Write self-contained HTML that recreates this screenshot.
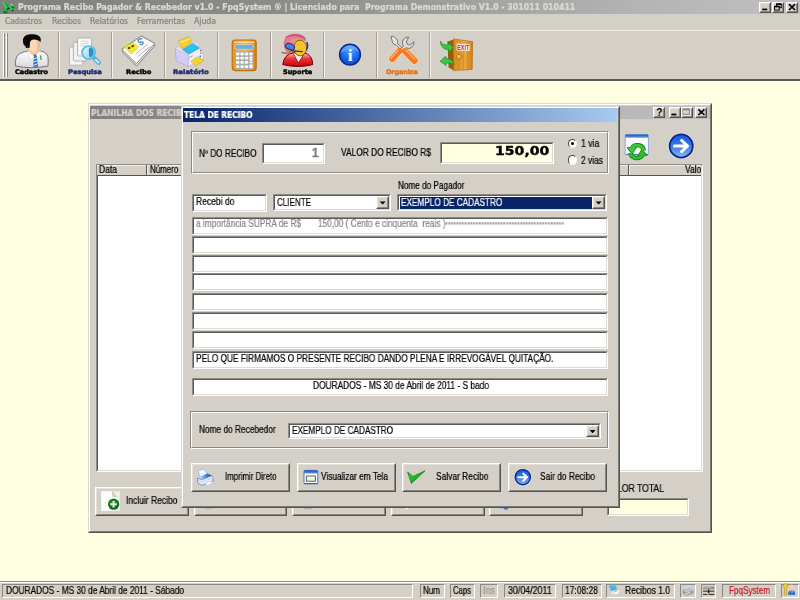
<!DOCTYPE html>
<html lang="pt-BR">
<head>
<meta charset="utf-8">
<title>Programa Recibo Pagador &amp; Recebedor v1.0</title>
<style>
html,body{margin:0;padding:0;}
body{width:800px;height:600px;overflow:hidden;position:relative;background:#ffffe1;font-family:"Liberation Sans",sans-serif;font-size:10px;color:#000;}
.a{position:absolute;box-sizing:border-box;}
.t{position:absolute;white-space:pre;line-height:14px;height:14px;transform-origin:0 0;will-change:transform;-webkit-text-stroke:0.22px;}
.face{background:#d4d0c8;}
#title{left:0;top:0;width:800px;height:14px;background:linear-gradient(90deg,#808080 0%,#8c8c8c 35%,#b4b4b4 80%,#c0c0c0 100%);}
#menu{left:0;top:14px;width:800px;height:16px;}
#tool{left:0;top:30px;width:800px;height:51px;border-top:1px solid #f1efea;border-bottom:2px solid #5a5854;}
.sep{position:absolute;top:32px;width:2px;height:46px;border-left:1px solid #a5a199;border-right:1px solid #f3f1ed;box-sizing:border-box;}
.sunk{border:1px solid;border-color:#8e8b86 #fff #fff #8e8b86;background:#fff;}
.sunk:before{content:"";position:absolute;left:0;top:0;right:0;bottom:0;border:1px solid;border-color:#5c5a57 #dedbd4 #dedbd4 #5c5a57;}
.btn{border:1px solid;border-color:#fff #55534f #55534f #fff;background:#d4d0c8;}
.btn:before{content:"";position:absolute;left:0;top:0;right:0;bottom:0;border:1px solid;border-color:#e4e1da #8b8882 #8b8882 #e4e1da;}
.grp{border:1px solid;border-color:#8b8882 #fff #fff #8b8882;}
.grp:before{content:"";position:absolute;left:0;top:0;right:0;bottom:0;border:1px solid;border-color:#fff #8b8882 #8b8882 #fff;}
.win{border:1px solid;border-color:#dcd9d2 #55534e #55534e #dcd9d2;background:#d4d0c8;}
.win:before{content:"";position:absolute;left:0;top:0;right:0;bottom:0;border:1px solid;border-color:#fff #7d7a73 #7d7a73 #fff;}
.sp{border:1px solid;border-color:#8b8882 #fff #fff #8b8882;}
.cb{position:absolute;box-sizing:border-box;width:12px;height:11px;top:107px;}
.dd{position:absolute;box-sizing:border-box;width:13px;height:13px;}
.dd svg,.cb svg{position:absolute;left:0;top:0;}
.radio{position:absolute;box-sizing:border-box;width:9.4px;height:9.4px;border-radius:50%;background:#fff;border:1.7px solid;border-color:#4a4844 #f6f4f0 #f6f4f0 #4a4844;}
</style>
</head>
<body>
<div id="title" class="a"></div>
<div id="menu" class="a face"></div>
<div id="tool" class="a face"></div>
<div class="a" style="left:3px;top:33px;width:2px;height:44px;border-left:1px solid #fff;border-right:1px solid #8b8882"></div>
<div class="a" style="left:6px;top:33px;width:2px;height:44px;border-left:1px solid #fff;border-right:1px solid #8b8882"></div>
<div class="sep" style="left:58px"></div>
<div class="sep" style="left:111px"></div>
<div class="sep" style="left:164px"></div>
<div class="sep" style="left:217px"></div>
<div class="sep" style="left:270px"></div>
<div class="sep" style="left:323px"></div>
<div class="sep" style="left:376px"></div>
<div class="sep" style="left:429px"></div>
<div class="a btn" style="left:759px;top:2px;width:12px;height:10.6px"></div>
<div class="a btn" style="left:772.2px;top:2px;width:11.6px;height:10.6px"></div>
<div class="a btn" style="left:785.8px;top:2px;width:12.4px;height:10.6px"></div>
<svg class="a" style="left:0;top:0" width="800" height="82" viewBox="0 0 800 82">
<defs>
<linearGradient id="gOr" x1="0" y1="0" x2="0" y2="1"><stop offset="0" stop-color="#ffa45a"/><stop offset="1" stop-color="#f06a10"/></linearGradient>
<linearGradient id="gRed" x1="0" y1="0" x2="0" y2="1"><stop offset="0" stop-color="#ffd0d0"/><stop offset=".45" stop-color="#f03030"/><stop offset="1" stop-color="#c00008"/></linearGradient>
<radialGradient id="gInfo" cx=".5" cy=".25" r=".8"><stop offset="0" stop-color="#5aa4ff"/><stop offset=".6" stop-color="#1468e8"/><stop offset="1" stop-color="#0a48c8"/></radialGradient>
<linearGradient id="gDoor" x1="0" y1="0" x2="1" y2="0"><stop offset="0" stop-color="#d88a20"/><stop offset=".6" stop-color="#eaa63c"/><stop offset="1" stop-color="#d08018"/></linearGradient>
<linearGradient id="gCalc" x1="0" y1="0" x2="1" y2="0"><stop offset="0" stop-color="#ec9414"/><stop offset=".5" stop-color="#f6b840"/><stop offset="1" stop-color="#dc800c"/></linearGradient>
<linearGradient id="gShirt" x1="0" y1="0" x2="0" y2="1"><stop offset="0" stop-color="#ffffff"/><stop offset="1" stop-color="#d8d8dc"/></linearGradient>
<linearGradient id="gLens" x1="0" y1="0" x2="1" y2="1"><stop offset="0" stop-color="#e8f6fc"/><stop offset="1" stop-color="#8ed0ee"/></linearGradient>
</defs>
<!-- main caption glyphs -->
<rect x="762.2" y="8.6" width="5" height="1.7" fill="#000"/>
<rect x="776.6" y="3.9" width="4.6" height="3.8" fill="none" stroke="#000" stroke-width="1"/>
<path d="M776.4 4.2h5" stroke="#000" stroke-width="1.5"/>
<rect x="774.6" y="6.3" width="4.6" height="3.8" fill="#d4d0c8" stroke="#000" stroke-width="1"/>
<path d="M774.4 6.6h5" stroke="#000" stroke-width="1.5"/>
<path d="M789 4.2 L795 10 M795 4.2 L789 10" stroke="#000" stroke-width="1.6"/>
<!-- app icon -->
<g>
<path d="M2.2 2.2 L4.4 1.2 L8.2 8.2 L6 9.6 Z" fill="#2fcf4a"/>
<path d="M4.4 1.2 L5.6 2.6 L8.8 7.8 L8.2 8.2 Z" fill="#0b6a22"/>
<circle cx="5.4" cy="10.6" r="2.7" fill="#1fb83c"/>
<path d="M2.9 11.6 A2.7 2.7 0 0 0 8 11.6 Z" fill="#0a6a20"/>
<path d="M7 9.4 L10 8.2" stroke="#063a12" stroke-width="1.4"/>
<ellipse cx="12" cy="7.4" rx="2.4" ry="3.6" fill="#35c453" transform="rotate(-25 12 7.4)"/>
<path d="M11.6 6.4 L14 8.2 M11.8 10 L13.6 11.2" stroke="#063a12" stroke-width="1.2"/>
<path d="M10.4 4.4 L12 4 L12.6 5.6" stroke="#8ce8a0" stroke-width="1" fill="none"/>
</g>
<!-- Cadastro: man -->
<g>
<path d="M15.4 66 Q14.6 54.5 22 52.6 L27.6 51 L40.6 51 Q48.6 52.6 48.2 60 L48 66 Q32 69.5 15.4 66 Z" fill="url(#gShirt)" stroke="#6a6a6a" stroke-width=".9"/>
<path d="M28.6 45 L39.4 45 L39.8 51.6 L34.6 56.2 L28.2 51.8 Z" fill="#f6c8a0"/>
<ellipse cx="34.2" cy="44.6" rx="6.1" ry="7.2" fill="#fbd9b8"/>
<path d="M36 38.6 Q40.6 39.6 40.2 46.6 Q39.6 51 36.4 52.4 Q38.6 46 36 38.6Z" fill="#f2b990"/>
<path d="M23 41.6 Q22.4 34.6 30.6 34.2 Q39.6 33.6 40.8 38.8 L40.6 42.2 Q38.6 39.4 34 39.4 Q30.6 39.6 30 42.4 L29.6 47.6 Q28.6 48.8 27.4 47.4 Q25.6 49.2 25.4 46 Q23.2 45.4 23 41.6Z" fill="#080808"/>
<path d="M28.2 51.4 L34.4 57 L31.4 59.6 L27 52.6Z M40 51.4 L34.8 57 L37.6 59.4 L41 52.4Z" fill="#ffffff" stroke="#c8c8cc" stroke-width=".4"/>
<path d="M33.6 54.6 L36 54.6 L37 56.8 L38.2 66.8 L33 66.8 L34 56.8Z" fill="#2f6fb5"/>
<path d="M33.6 59 L37.6 57.4 M33.2 62.2 L38 60.4 M33 65.4 L38.2 63.6" stroke="#cfe2f6" stroke-width="1.1"/>
<path d="M40.6 55.4 L41.2 60" stroke="#2ea83a" stroke-width="1.3"/>
</g>
<!-- Pesquisa -->
<g>
<rect x="69.4" y="47" width="13.4" height="18.2" rx="1.2" fill="#f4f4f4" stroke="#b0b0b0" stroke-width=".9"/>
<rect x="73.4" y="42.4" width="13.4" height="18.6" rx="1.2" fill="#f1f1f1" stroke="#a8a8a8" stroke-width=".9"/>
<rect x="77.6" y="38" width="14" height="18" rx="1.2" fill="#f7f7f7" stroke="#aeaeae" stroke-width=".9"/>
<path d="M80.6 41.4H88.6M80.6 43.6H88.6M80.6 45.8H86" stroke="#d0d0d4" stroke-width=".9"/>
<path d="M93.4 57.4 L98.8 62.8" stroke="#52b4da" stroke-width="4.4" stroke-linecap="round"/>
<path d="M95.8 59.8 L98.4 62.4" stroke="#e4f6fc" stroke-width="1.7" stroke-linecap="round"/>
<circle cx="88.6" cy="52.6" r="6.5" fill="url(#gLens)" stroke="#5cc0e4" stroke-width="1.9"/>
<path d="M89.6 47.6 Q93.8 48.2 93.6 52.6 Q93.4 56.6 89.8 57.6 Q88.2 55.4 89 53 Q87.8 50.6 89.6 47.6Z" fill="#2c8ed0"/>
</g>
<!-- Recibo -->
<g>
<path d="M122 51.6 L141.6 38.2 L155 45.6 L136.6 66 Z" fill="#ececec" stroke="#5a5a5a" stroke-width=".7"/>
<path d="M121.8 49.4 L141.4 36 L154.8 43.4 L136.4 63.6 Z" fill="#fafafa" stroke="#505050" stroke-width=".7"/>
<path d="M135.6 54.2 L148 44 M137.6 56.6 L150 46.4" stroke="#a8a8a8" stroke-width=".8"/>
<path d="M124.4 46.8 L133.2 42.6 L138.6 47.2 L131 54 Z" fill="#f2e630" stroke="#d8c810" stroke-width=".5"/>
<path d="M128.2 48.6 L130.2 47.4 M131.6 46.8 L133.8 45.6" stroke="#2a2a08" stroke-width="1.7"/>
<path d="M142.4 38.6 Q138.4 38.6 138.2 41 Q138.4 42.6 141 42 Q143.6 41.6 143 43.6 Q142 45 139.6 44.2" stroke="#5a92c4" stroke-width="1.5" fill="none"/>
</g>
<!-- Relatorio printer -->
<g>
<path d="M175.4 48.4 L188.4 54.2 L188.4 66.6 L176.2 60.8 Z" fill="#d4cef0" stroke="#aaa2dc" stroke-width=".7"/>
<path d="M188.4 54.2 L200 48 Q204 52 203.4 58.4 L188.4 66.6 Z" fill="#efecfb" stroke="#b8b2e2" stroke-width=".7"/>
<path d="M175.4 48.4 L191.6 42.4 Q197.6 42 200 48 L188.4 54.2 Z" fill="#e4e0f6"/>
<path d="M178.4 40.6 L189.4 36.6 L191.2 43 L181.4 48.8 Z" fill="#f2d030" stroke="#d4a818" stroke-width=".6"/>
<path d="M179.6 42.6 L190 38.6" stroke="#fbe978" stroke-width="1.2"/>
<path d="M182.6 49.4 L192.8 43.4 L199.4 48 L188.8 54 Z" fill="#30c0ec" stroke="#1890c4" stroke-width=".6"/>
<path d="M190.8 61.4 L197.4 56.8 L204 60.6 L196 65.8 Z" fill="#f4d430" stroke="#d0a814" stroke-width=".6"/>
<path d="M189.4 57.6 L192.6 55.8" stroke="#e88a3a" stroke-width="1"/>
<circle cx="200.6" cy="50.6" r=".8" fill="#d83030"/><circle cx="201" cy="53" r=".8" fill="#30a848"/><path d="M199 56.4l2-1.2v2.2z" fill="#208080"/>
</g>
<!-- calculator -->
<g>
<rect x="232.2" y="40" width="24" height="30.6" rx="3" fill="url(#gCalc)" stroke="#c06c04" stroke-width="1.1"/>
<rect x="233.6" y="41.4" width="21.2" height="1.6" rx=".8" fill="#fbd88a"/>
<rect x="234.8" y="44.4" width="18.8" height="5" rx="1.6" fill="#62b2ee" stroke="#fbe2a8" stroke-width=".6"/>
<rect x="235.2" y="52" width="18.2" height="17.2" fill="#a9a9a9"/>
<g fill="#fbfbfb">
<rect x="236" y="52.6" width="3.4" height="2.8" rx=".8"/><rect x="240.4" y="52.6" width="3.4" height="2.8" rx=".8"/><rect x="244.8" y="52.6" width="3.4" height="2.8" rx=".8"/><rect x="249.4" y="52.6" width="3.2" height="2.8" rx=".8"/>
<rect x="236" y="56.8" width="3.4" height="2.8" rx=".8"/><rect x="240.4" y="56.8" width="3.4" height="2.8" rx=".8"/><rect x="244.8" y="56.8" width="3.4" height="2.8" rx=".8"/><rect x="249.4" y="56.4" width="3.2" height="1.8" rx=".6"/><rect x="249.4" y="58.6" width="3.2" height="1.8" rx=".6"/>
<rect x="236" y="61" width="3.4" height="2.8" rx=".8"/><rect x="240.4" y="61" width="3.4" height="2.8" rx=".8"/><rect x="244.8" y="61" width="3.4" height="2.8" rx=".8"/><rect x="249.4" y="61.4" width="3.2" height="1.8" rx=".6"/>
<rect x="236" y="65.2" width="3.4" height="2.8" rx=".8"/><rect x="240.4" y="65.2" width="3.4" height="2.8" rx=".8"/><rect x="244.8" y="65.2" width="3.4" height="2.8" rx=".8"/><rect x="249.4" y="64.4" width="3.2" height="3.8" rx=".6"/>
</g>
</g>
<!-- Suporte -->
<g>
<path d="M282.8 64.6 Q283.6 54.6 294 52.6 L304 52.6 Q312.6 55 312.8 64.6 Q298 68.4 282.8 64.6Z" fill="url(#gRed)" stroke="#6a0008" stroke-width="1"/>
<path d="M292.8 52.8 L304.8 52.8 L298.4 63Z" fill="#fff4ee" stroke="#8a0a0a" stroke-width=".8"/>
<path d="M284.2 42.6 Q285.6 34 296.6 34 Q304.4 35 305.8 40.4 Q299 38 294 42 Q291 44.6 291.4 49 L290 53 Q287.6 53.4 286.4 51 Q284 47.6 284.2 42.6Z" fill="#ea7a98" stroke="#b8486a" stroke-width=".6"/>
<path d="M289.6 41 Q296 35.8 304.8 39.8 Q298.6 39 294 43Z" fill="#e89a5c"/>
<path d="M285.6 37.4 Q295 32.6 305.2 38.2" stroke="#d84a70" stroke-width="1.5" fill="none"/>
<ellipse cx="300.2" cy="48" rx="6.5" ry="7.8" fill="#f8c22c" stroke="#6a4010" stroke-width=".8"/>
<ellipse cx="290" cy="46.6" rx="4.7" ry="2.9" fill="#4a7ee0" stroke="#1a2a7a" stroke-width="1" transform="rotate(22 290 46.6)"/>
<path d="M281.6 52.4 L287.6 53.6 L291 51.6" stroke="#c0704a" stroke-width="1.7" fill="none"/>
<path d="M290.6 50.8 L302.8 51.6" stroke="#4a3a18" stroke-width="1.4"/>
<path d="M306.8 42 Q308.6 46 306.6 50" stroke="#2a3a8a" stroke-width="1.4" fill="none"/>
</g>
<!-- info -->
<g>
<circle cx="350" cy="54.6" r="11.2" fill="#dfe6f8"/>
<circle cx="350" cy="54.6" r="10.4" fill="url(#gInfo)" stroke="#0a2488" stroke-width="1.5"/>
<path d="M340.6 53 A9.6 9.6 0 0 1 359.2 52 Q350 46.6 340.6 53Z" fill="#7cb6ff" opacity=".55"/>
<text x="350.2" y="61.4" text-anchor="middle" font-family="'Liberation Serif','DejaVu Serif',serif" font-weight="bold" font-size="17.5" fill="#ffffff">i</text>
</g>
<!-- Organiza -->
<g>
<path d="M404.2 50.4 L414.6 60.8" stroke="#f8d0b0" stroke-width="7.6" stroke-linecap="round"/>
<path d="M399.8 50.4 L392 59.2" stroke="#f8d0b0" stroke-width="7.6" stroke-linecap="round"/>
<path d="M391 36.6 L393.6 36.2 L397.4 40 Q398.4 42.2 397.2 43.2 L405.4 51 L403.6 52.6 L395.6 44.4 Q393.6 44.8 392.6 42.6 Z" fill="#e4e4e4" stroke="#5a5a5a" stroke-width=".8"/>
<path d="M408.6 37 Q403.4 37.2 402.4 42 Q402.2 44.6 403.6 46 L398.4 51.4 L400.6 53.2 L405.8 47.8 Q409.4 49.6 412.4 46.8 Q414.4 44.6 413.8 41.8 L410.6 44.6 Q408.4 45.6 407 43.8 Q405.6 41.8 407.4 40Z" fill="#dcdcdc" stroke="#5a5a5a" stroke-width=".8"/>
<path d="M405 51 L414.4 60.6" stroke="url(#gOr)" stroke-width="5.8" stroke-linecap="round"/>
<path d="M405 51 L414.4 60.6" stroke="#f87820" stroke-width="5.8" stroke-linecap="round"/>
<path d="M399.4 50.8 L392.2 59" stroke="#f87820" stroke-width="5.8" stroke-linecap="round"/>
<path d="M406.4 50.6 L415 59.4" stroke="#ffb070" stroke-width="1.4" stroke-linecap="round"/>
<path d="M398 50.4 L391.2 58" stroke="#ffb070" stroke-width="1.4" stroke-linecap="round"/>
</g>
<!-- exit -->
<g>
<path d="M447.4 41.4 L454 39.4 L454 70.4 L448.6 67.4Z" fill="#9a5a10"/>
<path d="M453.4 39 L472.6 41.6 L472.2 69.4 L453.4 70.6Z" fill="url(#gDoor)" stroke="#b86c10" stroke-width=".7"/>
<path d="M458.6 52 V69.8 M463.4 52 V69.6 M468 52 V69.4" stroke="#c88420" stroke-width=".7"/>
<path d="M456.6 43.6 L469.8 44.6 L469.6 50.8 L456.6 50.6Z" fill="#fbf4f0"/>
<text x="457.2" y="50" font-family="'Liberation Sans',sans-serif" font-weight="bold" font-size="6.6" fill="#d02040" textLength="12" lengthAdjust="spacingAndGlyphs">EXIT</text>
<circle cx="459.2" cy="57" r="2.7" fill="#e8a030" stroke="#a86410" stroke-width=".6"/>
<circle cx="458.6" cy="56.2" r="1" fill="#fbd890"/>
<path d="M440.2 41 Q442 45.6 448.6 45 L448.4 42.6 L453.4 47.6 L449 52.2 L448.8 49.4 Q441.6 50.4 440.2 41Z" fill="#3cc840" stroke="#1a8a1e" stroke-width=".7"/>
<path d="M454 64.6 Q452.4 58 445.8 58.6 L445.8 56.2 L440.2 61.2 L446 65.4 L445.9 63 Q450.6 62.4 454 64.6Z" fill="#3cc840" stroke="#1a8a1e" stroke-width=".7"/>
</g>
</svg>


<!-- background window -->
<div class="a win" id="bg" style="left:87.5px;top:103px;width:624.5px;height:429.5px;"></div>
<div class="a" style="left:89.5px;top:105.5px;width:620.5px;height:13.8px;background:linear-gradient(90deg,#808080,#c0c0c0)"></div>
<div class="cb btn" style="left:653px"></div>
<div class="cb btn" style="left:669px"></div>
<div class="cb btn" style="left:681px"></div>
<div class="cb btn" style="left:695px"></div>
<!-- grid -->
<div class="a sunk" style="left:95.5px;top:163.5px;width:607.5px;height:308.5px;"></div>
<div class="a face" style="left:97px;top:165px;width:604px;height:11px;border-bottom:1px solid #55534f;border-top:1px solid #f4f2ee"></div>
<div class="a" style="left:146px;top:165px;width:2px;height:10px;background:#55534f;border-right:1px solid #f4f2ee"></div>
<div class="a" style="left:628px;top:165px;width:2px;height:10px;background:#55534f;border-right:1px solid #f4f2ee"></div>
<!-- bg buttons -->
<div class="a btn" style="left:95px;top:487px;width:94px;height:29px"></div>
<div class="a btn" style="left:194px;top:487px;width:93px;height:29px"></div>
<div class="a btn" style="left:292px;top:487px;width:94px;height:29px"></div>
<div class="a btn" style="left:391px;top:487px;width:94px;height:29px"></div>
<div class="a btn" style="left:489px;top:487px;width:94px;height:29px"></div>
<div class="a sunk" style="left:607px;top:498px;width:82px;height:18px;background:#ffffe1"></div>
<svg class="a" style="left:88px;top:104px" width="624" height="428" viewBox="88 104 624 428">
<defs>
<linearGradient id="gArr" x1="0" y1="0" x2="0" y2="1"><stop offset="0" stop-color="#1c58d8"/><stop offset=".5" stop-color="#3a7ae8"/><stop offset="1" stop-color="#8ab4f6"/></linearGradient>
<linearGradient id="gWinT" x1="0" y1="0" x2="0" y2="1"><stop offset="0" stop-color="#1a4eb8"/><stop offset="1" stop-color="#6aa0e8"/></linearGradient>
<radialGradient id="gGrn" cx=".45" cy=".4" r=".65"><stop offset="0" stop-color="#2a9a30"/><stop offset="1" stop-color="#075a10"/></radialGradient>
</defs>
<!-- caption glyphs -->
<text x="659.2" y="116.2" text-anchor="middle" font-family="'Liberation Sans',sans-serif" font-weight="bold" font-size="10" fill="#000">?</text>
<rect x="671.4" y="113.6" width="5" height="1.8" fill="#000"/>
<rect x="683.6" y="109.4" width="6.4" height="5.6" fill="none" stroke="#fff" stroke-width="1"/>
<rect x="683" y="108.8" width="6.4" height="5.6" fill="none" stroke="#8b8882" stroke-width="1"/>
<path d="M683 109.6h6.4" stroke="#8b8882" stroke-width="1.4"/>
<path d="M698.4 109.4 L704.4 115 M704.4 109.4 L698.4 115" stroke="#000" stroke-width="1.6"/>
<!-- refresh window icon -->
<rect x="625.2" y="134.6" width="23.2" height="20" rx="1.2" fill="#fbfcfe" stroke="#7a9ad0" stroke-width=".8"/>
<path d="M625.2 137.8 V135.8 Q625.2 134.6 626.4 134.6 H647.2 Q648.4 134.6 648.4 135.8 V137.8Z" fill="url(#gWinT)"/>
<path d="M625.4 154.4 H648.2" stroke="#5a7ab0" stroke-width="1"/>
<g stroke-linejoin="round">
<path d="M643.8 150.4 A6.4 5.8 0 0 0 631.6 148.6" fill="none" stroke="#0c7a10" stroke-width="4.4"/>
<path d="M627.4 147.8 L636.2 147.4 L632.2 153.6Z" fill="#0c7a10" stroke="#0c7a10" stroke-width="1.2"/>
<path d="M630.4 153 A6.4 5.8 0 0 0 642.6 154.6" fill="none" stroke="#0c7a10" stroke-width="4.4"/>
<path d="M646.8 155.4 L638 155.8 L642 149.6Z" fill="#0c7a10" stroke="#0c7a10" stroke-width="1.2"/>
<path d="M643.8 150.4 A6.4 5.8 0 0 0 631.6 148.6" fill="none" stroke="#34cc34" stroke-width="2.8"/>
<path d="M627.4 147.8 L636.2 147.4 L632.2 153.6Z" fill="#34cc34"/>
<path d="M630.4 153 A6.4 5.8 0 0 0 642.6 154.6" fill="none" stroke="#2cc02c" stroke-width="2.8"/>
<path d="M646.8 155.4 L638 155.8 L642 149.6Z" fill="#2cc02c"/>
</g>
<!-- big arrow -->
<circle cx="681.2" cy="146" r="13" fill="#e4eaf8"/>
<circle cx="681.2" cy="146" r="11.6" fill="url(#gArr)" stroke="#0a248a" stroke-width="1.8"/>
<path d="M674.4 146 H686.4 M681.6 140.4 L687.6 146 L681.6 151.6" fill="none" stroke="#fff" stroke-width="3" stroke-linecap="round" stroke-linejoin="round"/>
<!-- Incluir icon -->
<rect x="101.2" y="491.4" width="18.6" height="19.6" fill="#f2f0e2"/>
<path d="M101.4 491.6 H112.2 L117 496.6 V510.8 H101.4Z" fill="#ffffff"/>
<path d="M112.2 491.6 L112.6 496.4 L117 496.8Z" fill="#d4d4d4" stroke="#b0b0b0" stroke-width=".5"/>
<circle cx="113.6" cy="504.2" r="5.6" fill="url(#gGrn)"/>
<path d="M113.6 501 V507.4 M110.4 504.2 H116.8" stroke="#f4fbf0" stroke-width="1.9"/>
<!-- other button icon bits -->
<rect x="205" y="506.4" width="7" height="3" fill="#b8b8b8"/>
<rect x="304" y="506.4" width="8" height="3" fill="#b4b4b4"/>
<rect x="405" y="506.6" width="3" height="2.4" fill="#f4f4f4"/>
<path d="M500 508 q2 -2 4 0 q2 2 4 0" stroke="#4a6ad0" stroke-width="1.4" fill="none"/>
</svg>

<span class="t" style="left:90.50px;top:106px;font-size:8.7px;color:#d4d0c8;font-family:'DejaVu Sans Condensed','DejaVu Sans','Liberation Sans',sans-serif;font-weight:bold;transform:scaleX(0.9651);">PLANILHA DOS RECIBOS</span>
<span class="t" style="left:98.70px;top:163px;font-size:10px;color:#000;font-family:'Liberation Sans',sans-serif;transform:scaleX(0.8521);">Data</span>
<span class="t" style="left:150.00px;top:163px;font-size:10px;color:#000;font-family:'Liberation Sans',sans-serif;transform:scaleX(0.7954);">Número</span>
<span class="t" style="left:685.30px;top:163px;font-size:10px;color:#000;font-family:'Liberation Sans',sans-serif;transform:scaleX(0.8402);">Valo</span>
<span class="t" style="left:125.60px;top:494px;font-size:10px;color:#000;font-family:'Liberation Sans',sans-serif;transform:scaleX(0.8483);">Incluir Recibo</span>
<span class="t" style="left:606.00px;top:482px;font-size:10px;color:#000;font-family:'Liberation Sans',sans-serif;transform:scaleX(0.8649);">VALOR TOTAL</span>

<!-- dialog -->
<div class="a win" id="dlg" style="left:180.5px;top:105.5px;width:439.5px;height:402.5px;"></div>
<div class="a" style="left:183px;top:108px;width:434px;height:14px;background:linear-gradient(90deg,#0a246a 0%,#0e2a70 4%,#a6caf0 100%)"></div>
<div class="a grp" style="left:191px;top:131px;width:418px;height:43px"></div>
<div class="a sunk" style="left:262px;top:143px;width:63px;height:20.6px"></div>
<div class="a sunk" style="left:439.5px;top:141.8px;width:114.5px;height:22px;background:#ffffe1"></div>
<div class="radio" style="left:568px;top:138.9px"></div>
<div class="a" style="left:571.2px;top:142.1px;width:3.2px;height:3.2px;border-radius:50%;background:#000"></div>
<div class="radio" style="left:568px;top:155.2px"></div>
<div class="a sunk" style="left:192px;top:194px;width:75px;height:17.6px"></div>
<div class="a sunk" style="left:273px;top:194px;width:117.5px;height:17px"></div>
<div class="dd btn" style="left:376px;top:196px"></div>
<div class="a sunk" style="left:397px;top:194px;width:210px;height:17px"></div>
<div class="a" style="left:399.5px;top:196.5px;width:193px;height:12px;background:#0a246a"></div>
<div class="dd btn" style="left:592px;top:196px"></div>
<div class="a sunk" style="left:192px;top:216.5px;width:416px;height:18px"></div>
<div class="a sunk" style="left:192px;top:235.6px;width:416px;height:18px"></div>
<div class="a sunk" style="left:192px;top:254.6px;width:416px;height:18px"></div>
<div class="a sunk" style="left:192px;top:273.4px;width:416px;height:18px"></div>
<div class="a sunk" style="left:192px;top:292.6px;width:416px;height:18px"></div>
<div class="a sunk" style="left:192px;top:311.8px;width:416px;height:18px"></div>
<div class="a sunk" style="left:192px;top:331.0px;width:416px;height:18px"></div>
<div class="a sunk" style="left:192px;top:351.0px;width:416px;height:18px"></div>
<div class="a sunk" style="left:192px;top:378px;width:416px;height:18px"></div>

<div class="a grp" style="left:190px;top:410.5px;width:419px;height:38.5px"></div>
<div class="a sunk" style="left:288px;top:423px;width:313px;height:16.4px"></div>
<div class="dd btn" style="left:586px;top:425px;height:12.4px"></div>
<div class="a btn" style="left:191px;top:463px;width:99px;height:29px"></div>
<div class="a btn" style="left:297px;top:463px;width:99px;height:29px"></div>
<div class="a btn" style="left:402px;top:463px;width:99px;height:29px"></div>
<div class="a btn" style="left:508px;top:463px;width:99px;height:29px"></div>
<svg class="a" style="left:180px;top:106px" width="440" height="401" viewBox="180 106 440 401">
<defs>
<linearGradient id="gArr2" x1="0" y1="0" x2="0" y2="1"><stop offset="0" stop-color="#1c58d8"/><stop offset=".5" stop-color="#3a7ae8"/><stop offset="1" stop-color="#8ab4f6"/></linearGradient>
<linearGradient id="gPrB" x1="0" y1="0" x2="1" y2="0"><stop offset="0" stop-color="#b8dcf8"/><stop offset=".6" stop-color="#2a78e0"/><stop offset="1" stop-color="#1a58c0"/></linearGradient>
<linearGradient id="gWinT2" x1="0" y1="0" x2="0" y2="1"><stop offset="0" stop-color="#1a4eb8"/><stop offset="1" stop-color="#5a98e8"/></linearGradient>
<linearGradient id="gChk" x1="0" y1="0" x2="1" y2="1"><stop offset="0" stop-color="#30e030"/><stop offset="1" stop-color="#0e8a12"/></linearGradient>
</defs>
<!-- dropdown arrows -->
<path d="M379.6 201.4 h6 l-3 3.2z M595.6 201.4 h6 l-3 3.2z M589.6 430 h6 l-3 3.2z" fill="#000"/>
<!-- printer -->
<path d="M197.4 478.2 L202.2 479.6 L211.8 475.4 L213.6 480.6 L201.8 485.4 L197.6 482.4Z" fill="#e6e8f8" stroke="#6f86d6" stroke-width=".9"/>
<path d="M197.8 470.8 L204 468.8 L207.2 473.6 L200.4 477.2Z" fill="#f4f6fe" stroke="#93a7e0" stroke-width=".7"/>
<path d="M200.2 477.2 L207.2 473.4 L211.8 475.4 L202.2 479.4Z" fill="url(#gPrB)"/>
<path d="M205.2 483.4 L210.4 481.2 L213.4 482.6 L207.6 485.2Z" fill="#ffffff" stroke="#b0b8e0" stroke-width=".5"/>
<path d="M198 480.4 L202 482 L212.8 477.8" stroke="#c0c8ec" stroke-width=".7" fill="none"/>
<!-- window icon -->
<rect x="304" y="470.4" width="13.8" height="13.4" rx="1" fill="#fdfdfd" stroke="#3a66b8" stroke-width=".9"/>
<path d="M304 473.4 V471.4 Q304 470.4 305 470.4 H316.8 Q317.8 470.4 317.8 471.4 V473.4Z" fill="url(#gWinT2)"/>
<path d="M304.2 483.6 H317.6" stroke="#44608a" stroke-width="1"/>
<rect x="306.4" y="476" width="9" height="5.2" fill="#eef4e6" stroke="#566a56" stroke-width="1"/>
<!-- check -->
<path d="M407.6 472 L413 476.4 L425 470.8 L411.4 483.4Z" fill="url(#gChk)" stroke="#0c7a10" stroke-width=".7"/>
<!-- arrow -->
<circle cx="522.8" cy="477.2" r="8.8" fill="#e4eaf8"/>
<circle cx="522.8" cy="477.2" r="7.6" fill="url(#gArr2)" stroke="#0a248a" stroke-width="1.4"/>
<path d="M518.4 477.2 H526.2 M523.2 473.6 L527 477.2 L523.2 480.8" fill="none" stroke="#fff" stroke-width="2" stroke-linecap="round" stroke-linejoin="round"/>
</svg>


<!-- status bar -->
<div class="a face" id="status" style="left:0;top:581px;width:800px;height:19px;border-top:1px solid #8b8882;"></div>
<div class="a" style="left:0;top:582px;width:800px;height:1px;background:#fff"></div>
<div class="a sp" style="left:2px;top:584px;width:411px;height:13.5px"></div>
<div class="a sp" style="left:420px;top:584px;width:25px;height:13.5px"></div>
<div class="a sp" style="left:450px;top:584px;width:25px;height:13.5px"></div>
<div class="a sp" style="left:480px;top:584px;width:18px;height:13.5px"></div>
<div class="a sp" style="left:504px;top:584px;width:52px;height:13.5px"></div>
<div class="a sp" style="left:562px;top:584px;width:40px;height:13.5px"></div>
<div class="a sp" style="left:606px;top:584px;width:69px;height:13.5px"></div>
<div class="a sp" style="left:680px;top:584px;width:16px;height:13.5px"></div>
<div class="a sp" style="left:701px;top:584px;width:15px;height:13.5px"></div>
<div class="a sp" style="left:722px;top:584px;width:54px;height:13.5px"></div>
<div class="a sp" style="left:781px;top:584px;width:18px;height:13.5px"></div>

<svg class="a" style="left:600px;top:582px" width="200" height="18" viewBox="600 582 200 18">
<path d="M608.6 585.4 L615.4 585 L617.6 589.8 L611.2 591.4Z" fill="#4ab4e4" stroke="#8ad0f0" stroke-width=".5"/>
<path d="M611.2 591.4 L617.6 589.8 L620.6 591.6 L616 594.8 L611 593.2Z" fill="#fafafa" stroke="#c0c0c0" stroke-width=".4"/>
<path d="M613.4 592.2 L617.4 591" stroke="#9a9a9a" stroke-width=".8"/>
<!-- printer small -->
<path d="M684.4 585 L689 585 L690.6 588.6 L685.6 589.4Z" fill="#b8dcf6"/>
<path d="M682.6 589.8 L690.8 588.2 L693.6 590.6 L693.4 593.4 L686.4 595.8 L682.8 593.4Z" fill="#9a9a9a"/>
<path d="M683 590 L690.6 588.6 L693.2 590.6 L686 592.4Z" fill="#c4c4c4"/>
<path d="M685 594.2 L690 592.6" stroke="#f0f0f0" stroke-width="1"/>
<!-- network -->
<rect x="703" y="586.4" width="11.4" height="3" fill="#9a9a9a"/>
<rect x="703" y="586.4" width="11.4" height="1" fill="#c4c4c4"/>
<rect x="711.6" y="586.8" width="2" height="1.8" fill="#4ab85a"/>
<path d="M703 591.2 H714.4 M703 594.4 H714.4" stroke="#2a2a2a" stroke-width="1"/>
<path d="M708.6 589.4 V594" stroke="#1a1a1a" stroke-width="1.4"/>
<rect x="707" y="593" width="2" height="1.6" fill="#e8d020"/>
<!-- key + user -->
<path d="M784.2 584 Q785.6 583 787 584 L787.6 586.6 L786.4 588 L786.6 594.6 L785.4 595.6 L784.4 594.4 L784.6 588 L783.2 586.6Z" fill="#f0d020" stroke="#a88a08" stroke-width=".5"/>
<circle cx="791.6" cy="587" r="2.4" fill="#f4cfa4"/>
<path d="M788 595 Q788 590.4 791.6 590.2 Q795.4 590.4 795.2 595Z" fill="#3a6ad0"/>
<path d="M790.4 590.4 L792.8 590.4 L791.6 594.6Z" fill="#fff"/>
<path d="M791.6 590.6 V594" stroke="#c03030" stroke-width=".8"/>
</svg>

<span class="t" style="left:18.30px;top:0px;font-size:8.7px;color:#dcd9d3;font-family:'DejaVu Sans Condensed','DejaVu Sans','Liberation Sans',sans-serif;font-weight:bold;">Programa Recibo Pagador &amp; Recebedor v1.0 - FpqSystem ® | Licenciado para  Programa Demonstrativo V1.0 - 301011 010411</span>
<span class="t" style="left:5.00px;top:14px;font-size:8.5px;color:#85827b;font-family:'DejaVu Sans Condensed','DejaVu Sans','Liberation Sans',sans-serif;transform:scaleX(0.9693);">Cadastros</span>
<span class="t" style="left:52.00px;top:14px;font-size:8.5px;color:#85827b;font-family:'DejaVu Sans Condensed','DejaVu Sans','Liberation Sans',sans-serif;transform:scaleX(0.9836);">Recibos</span>
<span class="t" style="left:90.00px;top:14px;font-size:8.5px;color:#85827b;font-family:'DejaVu Sans Condensed','DejaVu Sans','Liberation Sans',sans-serif;">Relatórios</span>
<span class="t" style="left:137.00px;top:14px;font-size:8.5px;color:#85827b;font-family:'DejaVu Sans Condensed','DejaVu Sans','Liberation Sans',sans-serif;">Ferramentas</span>
<span class="t" style="left:194.00px;top:14px;font-size:8.5px;color:#85827b;font-family:'DejaVu Sans Condensed','DejaVu Sans','Liberation Sans',sans-serif;transform:scaleX(1.0115);">Ajuda</span>
<span class="t" style="left:15.00px;top:65px;font-size:6.3px;color:#000;font-family:'DejaVu Sans','Liberation Sans',sans-serif;font-weight:bold;transform:scaleX(1.0368);-webkit-text-stroke:0.45px;">Cadastro</span>
<span class="t" style="left:68.20px;top:65px;font-size:6.3px;color:#1c2a6e;font-family:'DejaVu Sans','Liberation Sans',sans-serif;font-weight:bold;transform:scaleX(1.0635);-webkit-text-stroke:0.45px;">Pesquisa</span>
<span class="t" style="left:125.70px;top:65px;font-size:6.3px;color:#000;font-family:'DejaVu Sans','Liberation Sans',sans-serif;font-weight:bold;transform:scaleX(1.0688);-webkit-text-stroke:0.45px;">Recibo</span>
<span class="t" style="left:173.00px;top:65px;font-size:6.3px;color:#1c2a6e;font-family:'DejaVu Sans','Liberation Sans',sans-serif;font-weight:bold;transform:scaleX(1.1000);-webkit-text-stroke:0.45px;">Relatório</span>
<span class="t" style="left:282.50px;top:65px;font-size:6.3px;color:#000;font-family:'DejaVu Sans','Liberation Sans',sans-serif;font-weight:bold;transform:scaleX(1.0336);-webkit-text-stroke:0.45px;">Suporte</span>
<span class="t" style="left:386.20px;top:65px;font-size:6.3px;color:#e8701a;font-family:'DejaVu Sans','Liberation Sans',sans-serif;font-weight:bold;-webkit-text-stroke:0.45px;">Organiza</span>
<span class="t" style="left:184.00px;top:108px;font-size:8.7px;color:#fff;font-family:'DejaVu Sans Condensed','DejaVu Sans','Liberation Sans',sans-serif;font-weight:bold;transform:scaleX(0.9570);">TELA DE RECIBO</span>
<span class="t" style="left:198.50px;top:147px;font-size:10px;color:#000;font-family:'Liberation Sans',sans-serif;transform:scaleX(0.8240);">Nº DO RECIBO</span>
<span class="t" style="left:312.00px;top:146px;font-size:12.5px;color:#808080;font-family:'Liberation Sans',sans-serif;font-weight:bold;transform:scaleX(0.9492);-webkit-text-stroke:0.4px;">1</span>
<span class="t" style="left:341.00px;top:146px;font-size:10px;color:#000;font-family:'Liberation Sans',sans-serif;transform:scaleX(0.8362);">VALOR DO RECIBO R$</span>
<span class="t" style="left:495.00px;top:144px;font-size:12.4px;color:#000;font-family:'DejaVu Sans','Liberation Sans',sans-serif;font-weight:bold;transform:scaleX(1.1374);-webkit-text-stroke:0.4px;">150,00</span>
<span class="t" style="left:581.00px;top:137px;font-size:10px;color:#000;font-family:'Liberation Sans',sans-serif;transform:scaleX(0.8710);">1 via</span>
<span class="t" style="left:581.00px;top:154px;font-size:10px;color:#000;font-family:'Liberation Sans',sans-serif;transform:scaleX(0.8421);">2 vias</span>
<span class="t" style="left:398.00px;top:179px;font-size:10px;color:#000;font-family:'Liberation Sans',sans-serif;transform:scaleX(0.8180);">Nome do Pagador</span>
<span class="t" style="left:195.60px;top:195px;font-size:10px;color:#000;font-family:'Liberation Sans',sans-serif;transform:scaleX(0.8527);">Recebi do</span>
<span class="t" style="left:277.00px;top:196px;font-size:10px;color:#000;font-family:'Liberation Sans',sans-serif;transform:scaleX(0.8050);">CLIENTE</span>
<span class="t" style="left:401.00px;top:196px;font-size:10px;color:#fff;font-family:'Liberation Sans',sans-serif;transform:scaleX(0.8220);">EXEMPLO DE CADASTRO</span>
<span class="t" style="left:196.00px;top:217px;font-size:10px;color:#868686;font-family:'Liberation Sans',sans-serif;transform:scaleX(0.8322);">a importância SUPRA de R$</span>
<span class="t" style="left:317.60px;top:217px;font-size:10px;color:#868686;font-family:'Liberation Sans',sans-serif;transform:scaleX(0.8274);">150,00 ( Cento e cinquenta  reais )</span>
<span class="t" style="left:445.00px;top:218px;font-size:7px;color:#a0a0a0;font-family:'Liberation Sans',sans-serif;transform:scaleX(1.0159);">*******************************************</span>
<span class="t" style="left:195.60px;top:352px;font-size:10px;color:#000;font-family:'Liberation Sans',sans-serif;transform:scaleX(0.8299);">PELO QUE FIRMAMOS O PRESENTE RECIBO DANDO PLENA E IRREVOGÁVEL QUITAÇÃO.</span>
<span class="t" style="left:312.70px;top:379px;font-size:10px;color:#000;font-family:'Liberation Sans',sans-serif;transform:scaleX(0.8362);">DOURADOS - MS 30 de Abril de 2011 - S bado</span>
<span class="t" style="left:199.00px;top:423px;font-size:10px;color:#000;font-family:'Liberation Sans',sans-serif;transform:scaleX(0.8301);">Nome do Recebedor</span>
<span class="t" style="left:291.50px;top:424px;font-size:10px;color:#000;font-family:'Liberation Sans',sans-serif;transform:scaleX(0.8196);">EXEMPLO DE CADASTRO</span>
<span class="t" style="left:224.50px;top:470px;font-size:10px;color:#000;font-family:'Liberation Sans',sans-serif;transform:scaleX(0.7855);">Imprimir Direto</span>
<span class="t" style="left:321.40px;top:470px;font-size:10px;color:#000;font-family:'Liberation Sans',sans-serif;transform:scaleX(0.8294);">Visualizar em Tela</span>
<span class="t" style="left:436.00px;top:470px;font-size:10px;color:#000;font-family:'Liberation Sans',sans-serif;transform:scaleX(0.8416);">Salvar Recibo</span>
<span class="t" style="left:540.00px;top:470px;font-size:10px;color:#000;font-family:'Liberation Sans',sans-serif;transform:scaleX(0.8385);">Sair do Recibo</span>
<span class="t" style="left:6.00px;top:584px;font-size:10px;color:#000;font-family:'Liberation Sans',sans-serif;transform:scaleX(0.8346);">DOURADOS - MS 30 de Abril de 2011 - Sábado</span>
<span class="t" style="left:423.00px;top:584px;font-size:10px;color:#000;font-family:'Liberation Sans',sans-serif;transform:scaleX(0.8047);">Num</span>
<span class="t" style="left:453.00px;top:584px;font-size:10px;color:#000;font-family:'Liberation Sans',sans-serif;transform:scaleX(0.7706);">Caps</span>
<span class="t" style="left:483.00px;top:584px;font-size:10px;color:#9a968e;font-family:'Liberation Sans',sans-serif;transform:scaleX(0.8993);">Ins</span>
<span class="t" style="left:508.00px;top:584px;font-size:10px;color:#000;font-family:'Liberation Sans',sans-serif;transform:scaleX(0.8862);">30/04/2011</span>
<span class="t" style="left:565.00px;top:584px;font-size:10px;color:#000;font-family:'Liberation Sans',sans-serif;transform:scaleX(0.8475);">17:08:28</span>
<span class="t" style="left:625.00px;top:584px;font-size:10px;color:#000;font-family:'Liberation Sans',sans-serif;transform:scaleX(0.8521);">Recibos 1.0</span>
<span class="t" style="left:729.00px;top:584px;font-size:10px;color:#c8181c;font-family:'Liberation Sans',sans-serif;transform:scaleX(0.8106);">FpqSystem</span>
</body>
</html>
